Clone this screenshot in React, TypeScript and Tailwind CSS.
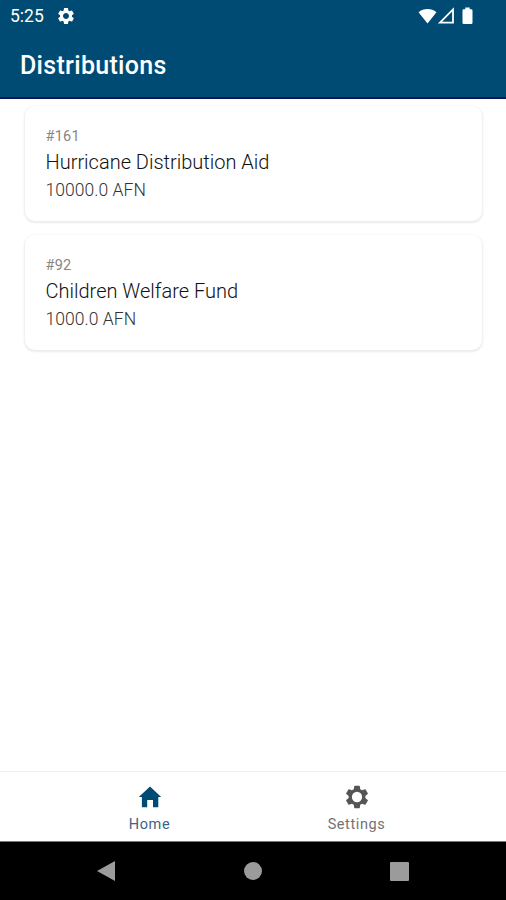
import type { ReactNode } from "react"
import { MdSettings } from "react-icons/md"

interface Distribution {
    id: number;
    name: string;
    amount: string;
}

const distributions: Distribution[] = [
    { id: 161, name: "Hurricane Distribution Aid", amount: "10000.0 AFN" },
    { id: 92, name: "Children Welfare Fund", amount: "1000.0 AFN" },
]

function HomeIcon() {
    return (
        <svg className="size-[28px]" viewBox="0 0 28 28" fill="currentColor">
            <path d="M14 3.5L25.2 14H22.3V24.2H17V17H11.2V24.2H5.9V14H2.8z" />
        </svg>
    )
}

function CogIcon() {
    return (
        <svg className="size-[28px]" viewBox="0 0 24 24" fill="currentColor" fillRule="evenodd">
            <path d="M19.14 12.94c.04-.3.06-.61.06-.94 0-.32-.02-.64-.07-.94l2.03-1.58c.18-.14.23-.41.12-.61l-1.92-3.32c-.12-.22-.37-.29-.59-.22l-2.39.96c-.5-.38-1.03-.7-1.62-.94l-.36-2.54c-.04-.24-.24-.41-.48-.41h-3.84c-.24 0-.43.17-.47.41l-.36 2.54c-.59.24-1.13.57-1.62.94l-2.39-.96c-.22-.08-.47 0-.59.22L2.74 8.87c-.12.21-.08.47.12.61l2.03 1.58c-.05.3-.09.63-.09.94s.02.64.07.94l-2.03 1.58c-.18.14-.23.41-.12.61l1.92 3.32c.12.22.37.29.59.22l2.39-.96c.5.38 1.03.7 1.62.94l.36 2.54c.05.24.24.41.48.41h3.84c.24 0 .44-.17.47-.41l.36-2.54c.59-.24 1.13-.56 1.62-.94l2.39.96c.22.08.47 0 .59-.22l1.92-3.32c.12-.22.07-.47-.12-.61zM12 7.6a4.4 4.4 0 1 0 0 8.8a4.4 4.4 0 1 0 0-8.8z" />
        </svg>
    )
}

function StatusBar() {
    return (
        <div className="flex h-8 items-center pl-[10px] pr-[33px]">
            <span className="w-[46px] text-[17.5px] leading-8">5:25</span>
            <MdSettings className="-mt-px size-[20px]" />
            <div className="-mt-px ml-auto flex items-center">
                <svg width="19" height="16" viewBox="0 0 19 16" fill="currentColor">
                    <path d="M0.5 4.2C5.5 -0.2 13.5 -0.2 18.5 4.2L9.5 15.5z" />
                </svg>
                <svg width="17" height="18" viewBox="0 0 17 18" className="ml-px" fill="none" stroke="currentColor" strokeWidth="1.8">
                    <path d="M2 15.6L15 2.4V15.6z" />
                </svg>
                <svg width="11" height="18" viewBox="0 0 11 18" className="ml-[7px]" fill="currentColor">
                    <path d="M3.3 0.5h4.4v1.8h1.6a1.2 1.2 0 0 1 1.2 1.2v12.3a1.2 1.2 0 0 1-1.2 1.2H1.7a1.2 1.2 0 0 1-1.2-1.2V3.5a1.2 1.2 0 0 1 1.2-1.2h1.6z" />
                </svg>
            </div>
        </div>
    )
}

function DistributionCard({ id, name, amount }: Distribution) {
    return (
        <div className="h-[115px] rounded-[10px] bg-white pl-[20.5px] pt-[21px] shadow-[0_1px_2px_1px_rgba(0,0,0,0.08)]">
            <p className="text-[14.5px] leading-5 tracking-[0.25px] text-[#858585]">#{id}</p>
            <p className="mt-px text-[20px] font-light leading-7 text-[#111111]">{name}</p>
            <p className="mt-px text-[17.5px] font-light leading-[26px] tracking-[0.05px] text-[#333333]">{amount}</p>
        </div>
    )
}

function NavItem({ icon, label, active }: { icon: ReactNode; label: string; active?: boolean }) {
    return (
        <button className={`flex w-[207px] flex-col items-center pt-[11px] ${active ? "text-[#004b73]" : "text-[#555555]"}`}>
            {icon}
            <span className={`mt-1 text-[14.5px] leading-5 tracking-[0.6px] ${active ? "text-[#3b6684]" : "text-[#737373]"}`}>{label}</span>
        </button>
    )
}

export default function App() {
    return (
        <div className="flex h-[900px] w-[506px] flex-col overflow-hidden bg-white font-['Roboto',sans-serif]">
            <header className="h-[99px] shrink-0 border-b-2 border-[#06165c] bg-[#004b73] text-white">
                <StatusBar />
                <h1 className="pl-5 pt-[18px] text-[25px] font-medium leading-8 tracking-[0.3px]">Distributions</h1>
            </header>

            <main className="flex flex-1 flex-col gap-3.5 pl-[25px] pr-6 pt-[7px]">
                {distributions.map((d) => (
                    <DistributionCard key={d.id} {...d} />
                ))}
            </main>

            <nav className="flex h-[70px] shrink-0 justify-center border-t border-[#f0f0f0]">
                <NavItem active label="Home" icon={<HomeIcon />} />
                <NavItem label="Settings" icon={<CogIcon />} />
            </nav>

            <div className="flex h-[59px] shrink-0 items-center justify-between border-t border-[#777777] bg-black px-[96px] text-[#9b9b9b]">
                <svg width="20" height="22" viewBox="0 0 20 22" fill="currentColor">
                    <path d="M1 11L19 1v20z" />
                </svg>
                <div className="size-[18px] rounded-full bg-current" />
                <div className="mr-px size-[19px] rounded-[1px] bg-current" />
            </div>
        </div>
    )
}
